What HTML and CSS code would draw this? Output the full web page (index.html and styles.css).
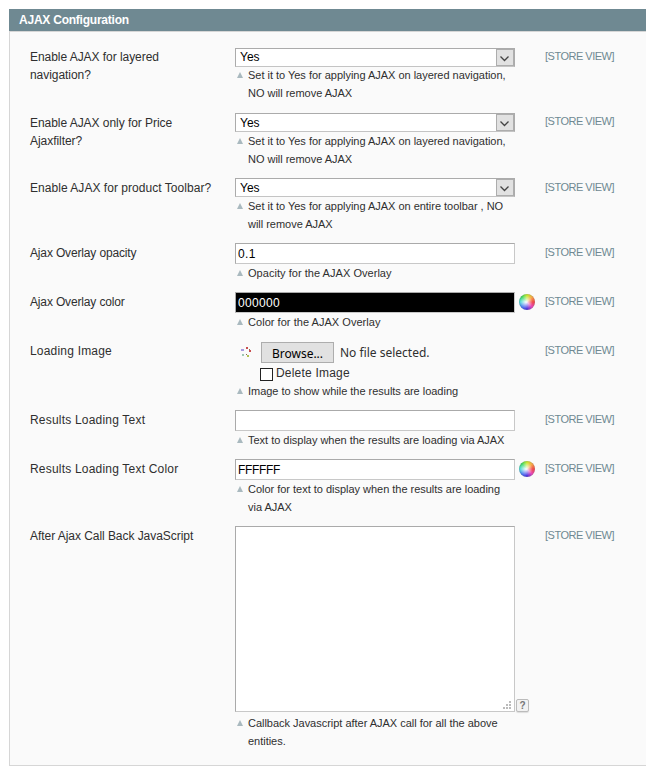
FILE: index.html
```html
<!DOCTYPE html>
<html lang="en">
<head>
<meta charset="utf-8">
<title>AJAX Configuration</title>
<link rel="stylesheet" href="styles.css">
</head>
<body>
<section class="panel">
  <h4 class="panel-head">AJAX Configuration</h4>
  <div class="fieldset">
    <div class="row first">
      <div class="label">Enable AJAX for layered<br>navigation?</div>
      <div class="value">
        <div class="select"><span>Yes</span><i class="arrow"><svg viewBox="0 0 15 15"><path d="M3.5 6.5 7.5 10.5 11.5 6.5"/></svg></i></div>
        <p class="note">Set it to Yes for applying AJAX on layered navigation,<br>NO will remove AJAX</p>
      </div>
      <div class="scope raised">[STORE VIEW]</div>
    </div>
    <div class="row">
      <div class="label">Enable AJAX only for Price<br>Ajaxfilter?</div>
      <div class="value">
        <div class="select"><span>Yes</span><i class="arrow"><svg viewBox="0 0 15 15"><path d="M3.5 6.5 7.5 10.5 11.5 6.5"/></svg></i></div>
        <p class="note">Set it to Yes for applying AJAX on layered navigation,<br>NO will remove AJAX</p>
      </div>
      <div class="scope raised">[STORE VIEW]</div>
    </div>
    <div class="row">
      <div class="label normal">Enable AJAX for product Toolbar?</div>
      <div class="value">
        <div class="select"><span>Yes</span><i class="arrow"><svg viewBox="0 0 15 15"><path d="M3.5 6.5 7.5 10.5 11.5 6.5"/></svg></i></div>
        <p class="note">Set it to Yes for applying AJAX on entire toolbar , NO<br>will remove AJAX</p>
      </div>
      <div class="scope">[STORE VIEW]</div>
    </div>
    <div class="row short">
      <div class="label tight">Ajax Overlay opacity</div>
      <div class="value">
        <div class="input">0.1</div>
        <p class="note open">Opacity for the AJAX Overlay</p>
      </div>
      <div class="scope">[STORE VIEW]</div>
    </div>
    <div class="row short">
      <div class="label tight">Ajax Overlay color</div>
      <div class="value">
        <div class="field"><div class="input dark">000000</div><i class="wheel"></i></div>
        <p class="note open">Color for the AJAX Overlay</p>
      </div>
      <div class="scope">[STORE VIEW]</div>
    </div>
    <div class="row upload">
      <div class="label wide">Loading Image</div>
      <div class="value">
        <div class="file">
          <svg class="spinner" viewBox="0 0 12 12"><path fill="#c85050" d="M6 1h2v2H6zM9 4h2v2H9z"/><path fill="#a99ae0" d="M1 3h3v2H1z"/><path fill="#9cc8b4" d="M2 8h2v2H2z"/><path fill="#b0c050" d="M7 9h2v2H7z"/><path fill="#8c6a50" d="M6 8h1v1H6zM9 3h1v1H9z"/></svg>
          <span class="browse">Browse...</span><span class="filename">No file selected.</span>
        </div>
        <div class="check"><i class="box"></i><span>Delete Image</span></div>
        <p class="note">Image to show while the results are loading</p>
      </div>
      <div class="scope">[STORE VIEW]</div>
    </div>
    <div class="row short">
      <div class="label wide">Results Loading Text</div>
      <div class="value">
        <div class="input"></div>
        <p class="note">Text to display when the results are loading via AJAX</p>
      </div>
      <div class="scope">[STORE VIEW]</div>
    </div>
    <div class="row colortext">
      <div class="label wide">Results Loading Text Color</div>
      <div class="value">
        <div class="field"><div class="input caps">FFFFFF</div><i class="wheel"></i></div>
        <p class="note">Color for text to display when the results are loading<br>via AJAX</p>
      </div>
      <div class="scope">[STORE VIEW]</div>
    </div>
    <div class="row last">
      <div class="label">After Ajax Call Back JavaScript</div>
      <div class="value">
        <div class="field area"><div class="textarea"><svg class="grip" viewBox="0 0 8 8"><path d="M6 0h2v2H6zM3 3h2v2H3zM6 3h2v2H6zM0 6h2v2H0zM3 6h2v2H3zM6 6h2v2H6z"/></svg></div><i class="help">?</i></div>
        <p class="note">Callback Javascript after AJAX call for all the above<br>entities.</p>
      </div>
      <div class="scope">[STORE VIEW]</div>
    </div>
  </div>
</section>
</body>
</html>
```
FILE: styles.css
```css
* { box-sizing: border-box; }
body {
  margin: 0;
  background: #fff;
  color: #2f2f2f;
  font: 12px/18px "Liberation Sans", Arial, sans-serif;
  overflow: hidden;
}
i { font-style: normal; }
p, h4 { margin: 0; }
.panel { margin: 9px 0 0 9px; white-space: nowrap; }
.panel-head {
  height: 22px;
  padding-left: 10px;
  background: #6f8992;
  color: #fff;
  font: bold 12px/22px "Liberation Sans", Arial, sans-serif;
  letter-spacing: -.23px;
}
.fieldset {
  height: 735px;
  padding: 16px 0 0 20px;
  background: #fafafa;
  border: 1px solid #d6d6d6;
  border-right: 0;
}
.row {
  display: grid;
  grid-template-columns: 205px 310px auto;
  height: 65px;
}
.row.short { height: 49px; }
.row.upload { height: 69px; }
.row.colortext { height: 67px; }
.row.last { height: auto; }
.label { padding-top: 1px; letter-spacing: -.05px; }
.label.normal { letter-spacing: .04px; }
.label.tight { letter-spacing: -.15px; }
.label.wide { letter-spacing: .2px; }
.first .label { padding-top: 0; }
.scope {
  padding-top: 1px;
  color: #6f8992;
  font-size: 11px;
  line-height: 16px;
  letter-spacing: -.5px;
}
.scope.raised { padding-top: 0; }
.select {
  display: flex;
  justify-content: space-between;
  width: 280px;
  height: 19px;
  padding-left: 4px;
  background: #fff;
  border: 1px solid #ababab;
  border-bottom-color: #c4c4c4;
  color: #000;
  line-height: 19px;
}
.first .select { line-height: 17px; }
.arrow {
  width: 18px;
  height: 17px;
  background: #e1e1e1;
  border: 1px solid #adadad;
}
.arrow svg {
  display: block;
  width: 15px;
  height: 15px;
  fill: none;
  stroke: #444;
  stroke-width: 1.3;
}
.note {
  position: relative;
  padding-left: 13px;
  font-size: 11px;
  letter-spacing: -.02px;
}
.note.open { letter-spacing: .04px; }
.first .note { margin-top: -1px; }
.last .note { margin-top: 2px; }
.note::before {
  content: "";
  position: absolute;
  left: 2px;
  top: 6px;
  border: 3.5px solid transparent;
  border-top: 0;
  border-bottom: 6px solid #a9b9bf;
}
.input {
  width: 280px;
  height: 21px;
  padding-left: 2px;
  background: #fff;
  border: 1px solid #aaa;
  border-right-color: #c8c8c8;
  border-bottom-color: #c8c8c8;
  color: #000;
  line-height: 21px;
  letter-spacing: .33px;
}
.input.caps { letter-spacing: -.33px; }
.input.dark { background: #000; color: #fff; }
.field { display: flex; align-items: center; }
.wheel {
  width: 16px;
  height: 16px;
  margin: 0 0 1px 4px;
  border-radius: 50%;
  background:
    radial-gradient(circle at 45% 50%, #fff 0, rgba(255,255,255,.6) 22%, transparent 55%),
    conic-gradient(#c8e832, #f8a848 45deg, #f04848 90deg, #e848b8 135deg, #5038e0 180deg, #4878f0 225deg, #48d8d8 270deg, #38d860 315deg, #c8e832);
  box-shadow: inset 0 0 1px #555;
}
.file { display: flex; align-items: center; height: 22px; padding-left: 5px; }
.spinner { width: 12px; height: 12px; }
.browse {
  width: 73px;
  height: 21px;
  margin-left: 9px;
  background: #e1e1e1;
  border: 1px solid #adadad;
  color: #000;
  text-align: center;
  font: 12px/21px "Noto Sans", sans-serif;
}
.filename { margin: 1px 0 0 6px; font: 12px/20px "Noto Sans", sans-serif; }
.check { display: flex; height: 19px; padding-left: 25px; line-height: 20px; letter-spacing: .2px; }
.box { width: 13px; height: 13px; margin: 5px 3px 0 0; background: #fff; border: 1px solid #222; }
.area { align-items: flex-end; }
.textarea {
  display: flex;
  justify-content: flex-end;
  align-items: flex-end;
  width: 280px;
  height: 186px;
  padding: 2px 3px;
  background: #fff;
  border: 1px solid #aaa;
  border-right-color: #c8c8c8;
  border-bottom-color: #c8c8c8;
}
.grip { width: 8px; height: 8px; fill: #bbb; }
.help {
  width: 13px;
  height: 13px;
  margin-left: 1px;
  background: #f2f2f2;
  border: 1px solid #bbb;
  border-radius: 2px;
  box-shadow: 0 1px 1px #ddd;
  color: #777;
  text-align: center;
  font: bold 10px/11px "Liberation Sans", Arial, sans-serif;
}
```
